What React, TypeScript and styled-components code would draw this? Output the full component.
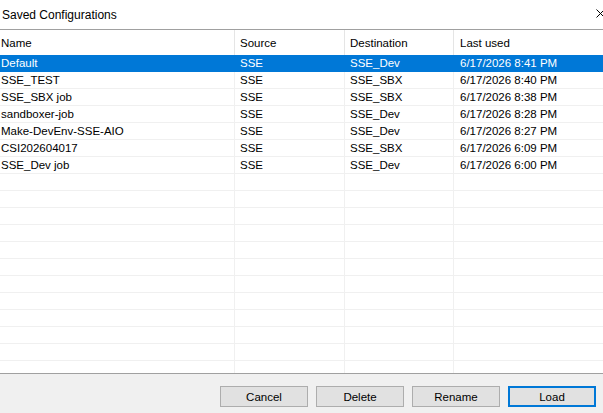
import React, { useState } from "react";
import styled, { createGlobalStyle } from "styled-components";

const GlobalStyle = createGlobalStyle`
  html, body {
    margin: 0;
    padding: 0;
    background: #fff;
  }
  body {
    font-family: "Liberation Sans", Arial, sans-serif;
    font-size: 11.5px;
    color: #000;
  }
`;

const Dialog = styled.div`
  width: 603px;
  height: 413px;
  display: flex;
  flex-direction: column;
  overflow: hidden;
  background: #fff;
`;

const TitleBar = styled.div`
  height: 29px;
  flex: none;
  display: flex;
  align-items: center;
  justify-content: space-between;
  padding: 0 0 0 2px;
  border-bottom: 1px solid #a0a0a0;
  font-size: 12px;
  overflow: hidden;
`;

const CloseButton = styled.button`
  width: 20px;
  height: 29px;
  margin-right: -13px;
  margin-top: -3px;
  flex: none;
  border: none;
  background: transparent;
  padding: 0;
  display: flex;
  align-items: center;
  justify-content: flex-start;
  cursor: pointer;
`;

const List = styled.div`
  flex: 1;
  overflow: hidden;
  border-bottom: 1px solid #a0a0a0;
`;

const columns = "235px 110px 109px 1fr";

const HeaderRow = styled.div`
  display: grid;
  grid-template-columns: ${columns};
  height: 25px;
`;

const HeaderCell = styled.div<{ $pad: number }>`
  display: flex;
  align-items: center;
  padding-left: ${(p) => p.$pad}px;
  border-right: 1px solid #e5e5e5;
  white-space: nowrap;
  &:last-child {
    border-right: none;
  }
`;

const Row = styled.div<{ $selected?: boolean }>`
  display: grid;
  grid-template-columns: ${columns};
  height: 17px;
  box-sizing: border-box;
  background: ${(p) => (p.$selected ? "#0078d7" : "#fff")};
  color: ${(p) => (p.$selected ? "#fff" : "#000")};
  border-bottom: 1px solid ${(p) => (p.$selected ? "#0078d7" : "#f0f0f0")};
`;

const Cell = styled.div<{ $pad: number; $selected?: boolean }>`
  padding-left: ${(p) => p.$pad}px;
  line-height: 16px;
  white-space: nowrap;
  overflow: hidden;
  border-right: 1px solid ${(p) => (p.$selected ? "#0078d7" : "#f0f0f0")};
  &:last-child {
    border-right: none;
  }
`;

const Footer = styled.div`
  height: 39px;
  flex: none;
  background: #f0f0f0;
  display: flex;
  justify-content: flex-end;
  align-items: flex-start;
  gap: 8px;
  padding: 12px 7px 0 0;
  box-sizing: border-box;
`;

const Button = styled.button<{ $default?: boolean }>`
  width: 88px;
  height: 21px;
  box-sizing: border-box;
  background: #e1e1e1;
  border: ${(p) => (p.$default ? "2px solid #0078d7" : "1px solid #adadad")};
  font-family: "Liberation Sans", Arial, sans-serif;
  font-size: 11.5px;
  color: #000;
  padding: 0;
  cursor: pointer;
`;

const pads = [1, 5, 5, 6];

const configs = [
  { name: "Default", source: "SSE", dest: "SSE_Dev", used: "6/17/2026 8:41 PM" },
  { name: "SSE_TEST", source: "SSE", dest: "SSE_SBX", used: "6/17/2026 8:40 PM" },
  { name: "SSE_SBX job", source: "SSE", dest: "SSE_SBX", used: "6/17/2026 8:38 PM" },
  { name: "sandboxer-job", source: "SSE", dest: "SSE_Dev", used: "6/17/2026 8:28 PM" },
  { name: "Make-DevEnv-SSE-AIO", source: "SSE", dest: "SSE_Dev", used: "6/17/2026 8:27 PM" },
  { name: "CSI202604017", source: "SSE", dest: "SSE_SBX", used: "6/17/2026 6:09 PM" },
  { name: "SSE_Dev job", source: "SSE", dest: "SSE_Dev", used: "6/17/2026 6:00 PM" },
];

const App: React.FC = () => {
  const [selected, setSelected] = useState(0);
  const empty = Array.from({ length: 14 });

  return (
    <Dialog>
      <GlobalStyle />
      <TitleBar>
        <span>Saved Configurations</span>
        <CloseButton aria-label="Close">
          <svg width="9" height="9" viewBox="0 0 9 9">
            <path d="M0.5 0.5 L8.5 8.5 M8.5 0.5 L0.5 8.5" stroke="#000" strokeWidth="1" />
          </svg>
        </CloseButton>
      </TitleBar>

      <List>
        <HeaderRow>
          <HeaderCell $pad={pads[0]}>Name</HeaderCell>
          <HeaderCell $pad={pads[1]}>Source</HeaderCell>
          <HeaderCell $pad={pads[2]}>Destination</HeaderCell>
          <HeaderCell $pad={pads[3]}>Last used</HeaderCell>
        </HeaderRow>
        {configs.map((c, i) => {
          const sel = i === selected;
          return (
            <Row key={c.name} $selected={sel} onClick={() => setSelected(i)}>
              <Cell $pad={pads[0]} $selected={sel}>{c.name}</Cell>
              <Cell $pad={pads[1]} $selected={sel}>{c.source}</Cell>
              <Cell $pad={pads[2]} $selected={sel}>{c.dest}</Cell>
              <Cell $pad={pads[3]} $selected={sel}>{c.used}</Cell>
            </Row>
          );
        })}
        {empty.map((_, i) => (
          <Row key={"e" + i}>
            <Cell $pad={0} />
            <Cell $pad={0} />
            <Cell $pad={0} />
            <Cell $pad={0} />
          </Row>
        ))}
      </List>

      <Footer>
        <Button>Cancel</Button>
        <Button>Delete</Button>
        <Button>Rename</Button>
        <Button $default>Load</Button>
      </Footer>
    </Dialog>
  );
};

export default App;
